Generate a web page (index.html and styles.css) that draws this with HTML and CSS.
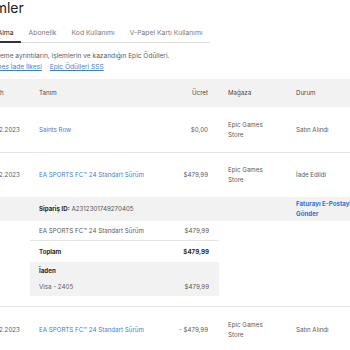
FILE: index.html
```html
<!DOCTYPE html>
<html lang="tr">
<head>
    <meta charset="UTF-8">
    <meta name="viewport" content="width=device-width, initial-scale=1.0">
    <title>İşlemler</title>
    <link rel="stylesheet" href="styles.css">
</head>
<body>
    <div class="page">
        <h1 class="title">İşlemler</h1>
        <div class="tabs">
            <span class="tab active">Satın Alma</span>
            <span class="tab">Abonelik</span>
            <span class="tab">Kod Kullanımı</span>
            <span class="tab">V-Papel Kartı Kullanımı</span>
        </div>
        <p class="intro">Bütün ödeme ayrıntıların, işlemlerin ve kazandığın Epic Ödülleri.</p>
        <p class="intro-links"><a href="#">Epic Games İade İlkesi</a><a href="#">Epic Ödülleri SSS</a></p>

        <div class="table">
            <div class="row head">
                <div>Tarih</div>
                <div>Tanım</div>
                <div class="price">Ücret</div>
                <div class="store">Mağaza</div>
                <div>Durum</div>
            </div>

            <div class="row line">
                <div>14.12.2023</div>
                <div><a href="#">Saints Row</a></div>
                <div class="price">$0,00</div>
                <div class="store">Epic Games Store</div>
                <div>Satın Alındı</div>
            </div>

            <div class="group">
                <div class="row">
                    <div>14.12.2023</div>
                    <div><a href="#">EA SPORTS FC™ 24 Standart Sürüm</a></div>
                    <div class="price">$479,99</div>
                    <div class="store">Epic Games Store</div>
                    <div>İade Edildi</div>
                </div>
                <div class="row order">
                    <div></div>
                    <div class="order-id"><b>Sipariş ID:</b> A2312301749270405</div>
                    <div class="store"></div>
                    <div><a href="#" class="strong-link">Faturayı E-Postayla Gönder</a></div>
                </div>
                <div class="details">
                    <div class="detail-line item">
                        <span>EA SPORTS FC™ 24 Standart Sürüm</span>
                        <span>$479,99</span>
                    </div>
                    <div class="detail-line total">
                        <span>Toplam</span>
                        <span>$479,99</span>
                    </div>
                    <div class="refund">
                        <div class="refund-title">İaden</div>
                        <div class="detail-line">
                            <span>Visa - 2405</span>
                            <span>$479,99</span>
                        </div>
                    </div>
                </div>
            </div>

            <div class="row">
                <div>14.12.2023</div>
                <div><a href="#">EA SPORTS FC™ 24 Standart Sürüm</a></div>
                <div class="price">- $479,99</div>
                <div class="store">Epic Games Store</div>
                <div>Satın Alındı</div>
            </div>
        </div>
    </div>
</body>
</html>
```

FILE: styles.css
```css
html, body {
    margin: 0;
    overflow: hidden;
    background: #fff;
}
body {
    font-family: Inter, "Noto Sans", sans-serif;
    color: #5a5a5a;
}
a {
    color: #3b7fd6;
    text-decoration: none;
}
.page {
    margin-left: -28px;
    width: 440px;
}
.title {
    margin: -1px 0 0;
    font-size: 14px;
    line-height: 18px;
    font-weight: 400;
    color: #202020;
}
.tabs {
    display: inline-flex;
    margin-top: 12px;
    border-bottom: 1px solid #dedede;
}
.tab {
    padding: 0 7.5px 4px;
    font-size: 6.8px;
    line-height: 8px;
    color: #7a7a7a;
    border-bottom: 2px solid transparent;
    margin-bottom: -1px;
}
.tab.active {
    color: #2a2a2a;
    border-bottom-color: #333;
}
.intro, .intro-links {
    margin: 0;
    font-size: 6.6px;
    line-height: 11px;
}
.intro {
    margin-top: 8px;
}
.intro-links a {
    text-decoration: underline;
    margin-right: 8px;
}
.table {
    margin-top: 6px;
    font-size: 6.2px;
    line-height: 10px;
}
.row {
    display: grid;
    grid-template-columns: 50px 130px 39px 88px 70px 1fr;
    align-items: center;
    padding-left: 17px;
    height: 45px;
}
.row.head {
    height: 28px;
    background: #f2f2f2;
    color: #4a4a4a;
}
.row.line {
    border-bottom: 1px solid #e6e6e6;
}
.price {
    text-align: right;
}
.store {
    padding: 0 28px 0 20px;
}
.group {
    border-bottom: 1px solid #e6e6e6;
    padding-bottom: 10px;
}
.group > .row:first-child {
    height: 44px;
}
.row.order {
    height: 24px;
    background: #f2f2f2;
}
.order-id {
    grid-column: 2 / 4;
    color: #555;
}
.order-id b {
    color: #2a2a2a;
}
.strong-link {
    font-weight: 700;
    color: #2f74d0;
}
.details {
    margin-left: 58px;
    width: 189px;
}
.detail-line {
    display: flex;
    justify-content: space-between;
    padding: 0 10px 0 9px;
    height: 19px;
    align-items: center;
}
.detail-line.item {
    border-bottom: 1px solid #e6e6e6;
}
.detail-line.total {
    height: 21px;
    font-weight: 700;
    color: #2a2a2a;
}
.refund {
    background: #f2f2f2;
    padding: 4px 0;
}
.refund-title {
    padding: 0 9px;
    height: 10px;
    font-weight: 700;
    color: #2a2a2a;
}
.refund .detail-line {
    height: 10px;
    margin-top: 6px;
}
```
